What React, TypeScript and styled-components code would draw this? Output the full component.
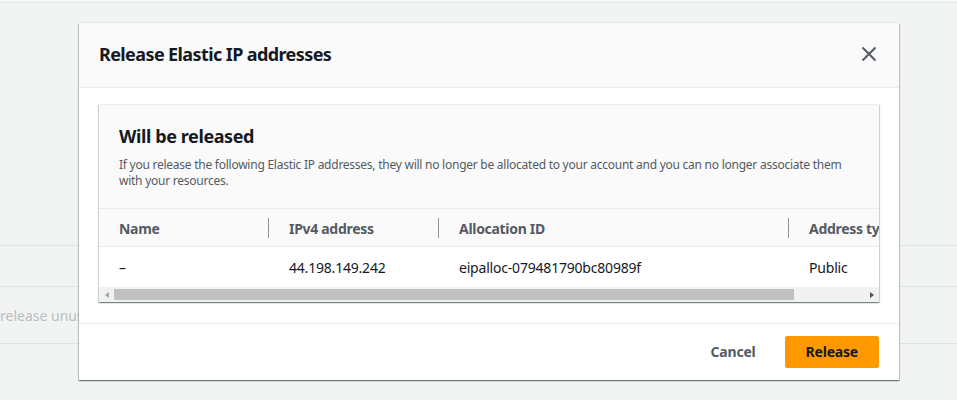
import React from "react";
import styled, { createGlobalStyle } from "styled-components";

const Global = createGlobalStyle`
  html, body { margin: 0; padding: 0; }
  body {
    background: #f2f3f3;
    font-family: "Noto Sans", "Open Sans", Arial, sans-serif;
    color: #16191f;
    -webkit-font-smoothing: antialiased;
  }
  * { box-sizing: border-box; }
`;

const Page = styled.div`
  position: relative;
  width: 957px;
  height: 400px;
  overflow: hidden;
  background: #f2f3f3;
`;

const TopStrip = styled.div`
  height: 3px;
  background: #f7f8f8;
  border-bottom: 1px solid #e4e7e7;
`;

const BgTable = styled.div`
  padding-top: 242px;
`;

const BgRow = styled.div<{ $h: number }>`
  height: ${(p) => p.$h}px;
  border-top: 1px solid #dde5ea;
  display: flex;
  align-items: center;
  font-size: 14px;
  color: #b9bfc1;
  white-space: nowrap;
`;

const BgRowLast = styled.div`
  border-top: 1px solid #dde5ea;
`;

const Overlay = styled.div`
  position: absolute;
  inset: 0;
  padding: 23px 0 0 79px;
`;

const Modal = styled.div`
  width: 820px;
  background: #ffffff;
  box-shadow: 0 1px 1px 0 rgba(0, 28, 36, 0.35),
    1px 1px 1px 0 rgba(0, 28, 36, 0.18), -1px 1px 1px 0 rgba(0, 28, 36, 0.18),
    0 -1px 0 0 rgba(0, 28, 36, 0.06);
`;

const Header = styled.div`
  height: 65px;
  background: #fafafa;
  border-bottom: 1px solid #eaeded;
  display: flex;
  align-items: center;
  justify-content: space-between;
  padding: 0 22px 3px 20px;
`;

const Title = styled.h1`
  margin: 0;
  font-size: 18px;
  line-height: 22px;
  font-weight: 700;
  color: #16191f;
  letter-spacing: -0.6px;
`;

const CloseButton = styled.button`
  border: none;
  background: none;
  padding: 0;
  width: 16px;
  height: 16px;
  display: flex;
  color: #545b64;
  cursor: pointer;
`;

const Body = styled.div`
  padding: 16px 20px 21px;
`;

const Container = styled.div`
  background: #fafafa;
  border-top: 1px solid #eaeded;
  box-shadow: 0 1px 1px 0 rgba(0, 28, 36, 0.35),
    1px 1px 1px 0 rgba(0, 28, 36, 0.15), -1px 1px 1px 0 rgba(0, 28, 36, 0.15);
`;

const ContainerHeader = styled.div`
  height: 103px;
  padding: 19px 20px 0;
`;

const SectionTitle = styled.h2`
  margin: 0;
  font-size: 18px;
  line-height: 24px;
  font-weight: 700;
  color: #16191f;
  letter-spacing: -0.4px;
`;

const Description = styled.p`
  margin: 9px 0 0;
  font-size: 12px;
  line-height: 16px;
  color: #545b64;
  letter-spacing: -0.25px;
`;

const TableViewport = styled.div`
  overflow: hidden;
  border-top: 1px solid #eaeded;
`;

const TableGrid = styled.div`
  width: 880px;
  display: grid;
  grid-template-columns: 169px 170px 350px 191px;
`;

const HeadCell = styled.div<{ $sep?: boolean }>`
  position: relative;
  height: 38px;
  background: #fafafa;
  border-bottom: 1px solid #eaeded;
  padding: 1px 0 0 ${(p) => (p.$sep ? 21 : 20)}px;
  display: flex;
  align-items: center;
  font-size: 14px;
  font-weight: 700;
  color: #545b64;
  letter-spacing: -0.3px;
  white-space: nowrap;
  ${(p) =>
    p.$sep &&
    `
    &::before {
      content: "";
      position: absolute;
      left: 0;
      top: 9px;
      width: 1px;
      height: 20px;
      background: #879596;
    }
  `}
`;

const Cell = styled.div<{ $sep?: boolean }>`
  height: 40px;
  background: #ffffff;
  padding: 1px 0 0 ${(p) => (p.$sep ? 21 : 20)}px;
  display: flex;
  align-items: center;
  font-size: 14px;
  color: #16191f;
  letter-spacing: -0.2px;
  white-space: nowrap;
`;

const Scrollbar = styled.div`
  height: 15px;
  background: #f1f1f1;
  display: flex;
  align-items: center;
`;

const ScrollArrow = styled.div<{ $dir: "left" | "right"; $active?: boolean }>`
  width: 15px;
  height: 15px;
  display: flex;
  align-items: center;
  justify-content: center;
  &::after {
    content: "";
    width: 0;
    height: 0;
    border-top: 3.5px solid transparent;
    border-bottom: 3.5px solid transparent;
    ${(p) =>
      p.$dir === "left"
        ? `border-right: 4px solid ${p.$active ? "#505050" : "#a3a3a3"};`
        : `border-left: 4px solid ${p.$active ? "#505050" : "#a3a3a3"};`}
  }
`;

const ScrollTrack = styled.div`
  flex: 1;
  height: 15px;
  display: flex;
  align-items: center;
`;

const ScrollThumb = styled.div`
  height: 11px;
  background: #c1c1c1;
`;

const Footer = styled.div`
  border-top: 1px solid #eaeded;
  padding: 12px 20px;
  display: flex;
  justify-content: flex-end;
  gap: 8px;
`;

const Button = styled.button<{ $primary?: boolean }>`
  font-family: inherit;
  font-size: 14px;
  font-weight: 700;
  line-height: 22px;
  padding: 4px 20px;
  border-radius: 2px;
  letter-spacing: -0.2px;
  border: 1px solid ${(p) => (p.$primary ? "#ff9900" : "transparent")};
  background: ${(p) => (p.$primary ? "#ff9900" : "transparent")};
  color: ${(p) => (p.$primary ? "#16191f" : "#545b64")};
  cursor: pointer;
`;

const columns = ["Name", "IPv4 address", "Allocation ID", "Address type"];
const row = ["–", "44.198.149.242", "eipalloc-079481790bc80989f", "Public"];

export default function App() {
  return (
    <>
      <Global />
      <Page>
        <TopStrip />
        <BgTable>
          <BgRow $h={41} />
          <BgRow $h={57}>release unused addresses</BgRow>
          <BgRowLast />
        </BgTable>
        <Overlay>
          <Modal role="dialog" aria-label="Release Elastic IP addresses">
            <Header>
              <Title>Release Elastic IP addresses</Title>
              <CloseButton aria-label="Close">
                <svg width="16" height="16" viewBox="0 0 16 16">
                  <path
                    d="M1.5 1.5 L14.5 14.5 M14.5 1.5 L1.5 14.5"
                    stroke="currentColor"
                    strokeWidth="2"
                    fill="none"
                  />
                </svg>
              </CloseButton>
            </Header>
            <Body>
              <Container>
                <ContainerHeader>
                  <SectionTitle>Will be released</SectionTitle>
                  <Description>
                    If you release the following Elastic IP addresses, they will
                    no longer be allocated to your account and you can no longer
                    associate them with your resources.
                  </Description>
                </ContainerHeader>
                <TableViewport>
                  <TableGrid>
                    {columns.map((c, i) => (
                      <HeadCell key={c} $sep={i > 0}>
                        {c}
                      </HeadCell>
                    ))}
                    {row.map((c, i) => (
                      <Cell key={i} $sep={i > 0}>
                        {c}
                      </Cell>
                    ))}
                  </TableGrid>
                </TableViewport>
                <Scrollbar>
                  <ScrollArrow $dir="left" />
                  <ScrollTrack>
                    <ScrollThumb style={{ width: "680px" }} />
                  </ScrollTrack>
                  <ScrollArrow $dir="right" $active />
                </Scrollbar>
              </Container>
            </Body>
            <Footer>
              <Button>Cancel</Button>
              <Button $primary>Release</Button>
            </Footer>
          </Modal>
        </Overlay>
      </Page>
    </>
  );
}
